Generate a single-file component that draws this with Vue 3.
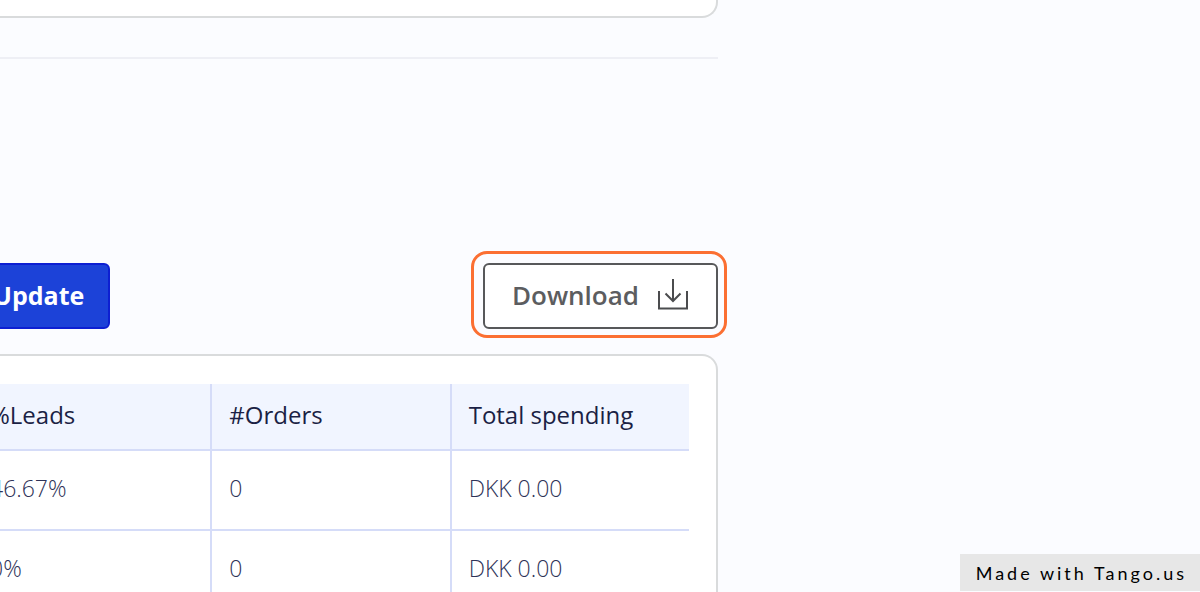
<script setup>
const columns = ['%Leads', '#Orders', 'Total spending']
const rows = [
  ['46.67%', '0', 'DKK 0.00'],
  ['0%', '0', 'DKK 0.00'],
]
</script>

<template>
  <div class="page">
    <main class="content">
      <section class="card card-top"></section>
      <hr class="divider" />
      <div class="toolbar">
        <button class="btn update" type="button">Update</button>
        <button class="btn download" type="button">
          Download
          <svg class="icon" viewBox="0 0 32 32" aria-hidden="true">
            <path d="M2 12V29.5H30V12" />
            <path d="M16 0V22M8.5 14.5L16 22L23.5 14.5" />
          </svg>
        </button>
      </div>
      <section class="card card-table">
        <table>
          <thead>
            <tr>
              <th v-for="c in columns" :key="c" scope="col">{{ c }}</th>
            </tr>
          </thead>
          <tbody>
            <tr v-for="(row, i) in rows" :key="i">
              <td v-for="(cell, j) in row" :key="j">{{ cell }}</td>
            </tr>
          </tbody>
        </table>
      </section>
    </main>
    <div class="badge">Made with Tango.us</div>
  </div>
</template>

<style>
body {
  background: #fbfcff;
}
</style>

<style scoped>
.page {
  position: relative;
  box-sizing: border-box;
  height: 100vh;
  overflow: hidden;
  padding-right: 482px;
  background: #fbfcff;
  font-family: "Open Sans", "Noto Sans", sans-serif;
}
.content {
  margin-left: -29px;
}
.card {
  box-sizing: border-box;
  border: 2px solid #d9dbdc;
  border-left: 0;
  background: #fff;
}
.card-top {
  height: 18px;
  border-top: 0;
  border-radius: 0 0 16px 0;
}
.divider {
  height: 2px;
  margin: 37px 0 0;
  border: 0;
  background: #eeeff5;
  margin-top: 39px;
}
.toolbar {
  display: flex;
  justify-content: space-between;
  margin-top: 204px;
  margin-left: -4px;
}
.btn {
  display: flex;
  align-items: center;
  box-sizing: border-box;
  height: 66px;
  border-radius: 6px;
  font-family: inherit;
  line-height: 34px;
}
.update {
  padding: 0 24px 2px;
  border: 2px solid #0d1fd2;
  background: #1c42d8;
  color: #fff;
  font-size: 25px;
  font-weight: 700;
}
.download {
  position: relative;
  gap: 18px;
  padding: 0 27px 2px;
  border: 2px solid #57585a;
  background: #fff;
  color: #5c5d5f;
  font-size: 26px;
  font-weight: 600;
}
.download::after {
  content: "";
  position: absolute;
  inset: -14px -11px -11px -14px;
  border: 3px solid #fb6f32;
  border-radius: 16px;
}
.icon {
  width: 32px;
  height: 32px;
  fill: none;
  stroke: #4b4c4e;
  stroke-width: 2;
}
.card-table {
  margin-top: 25px;
  padding: 28px 27px 28px 0;
  border-radius: 0 16px 0 0;
}
table {
  width: 100%;
  table-layout: fixed;
  border-collapse: separate;
  border-spacing: 0;
}
th,
td {
  box-sizing: border-box;
  padding: 0 17px 4px;
  border-bottom: 2px solid #d5dcf8;
  border-left: 2px solid #d5dcf8;
  text-align: left;
  white-space: nowrap;
}
th {
  height: 67px;
  background: #f1f5ff;
  color: #1b1f44;
  font-size: 24px;
  font-weight: 500;
}
td {
  height: 80px;
  color: #2f3358;
  font-size: 23px;
  font-weight: 300;
}
.badge {
  position: absolute;
  right: 0;
  bottom: 1px;
  padding: 1px 13px 0 16px;
  background: #e7e7e7;
  color: #000;
  font-family: Lato, sans-serif;
  font-size: 18px;
  line-height: 36px;
  letter-spacing: 3px;
}
</style>
